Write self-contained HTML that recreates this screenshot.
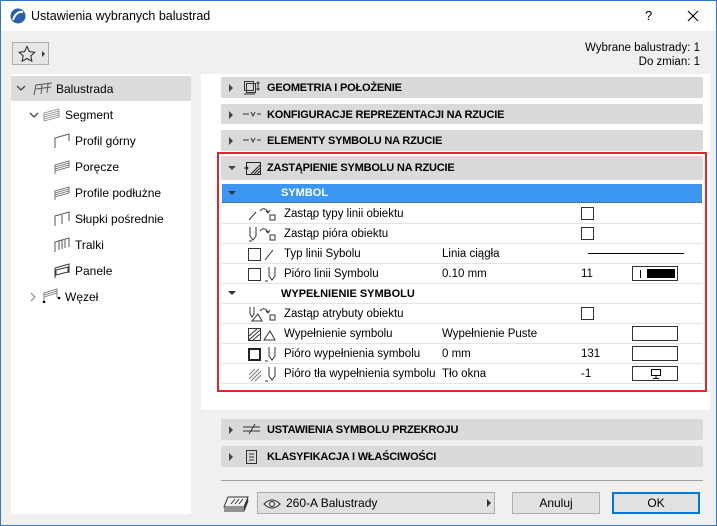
<!DOCTYPE html>
<html><head><meta charset="utf-8"><style>
*{margin:0;padding:0;box-sizing:border-box}
body{width:717px;height:526px;background:#f0f0f0;font-family:"Liberation Sans",sans-serif;font-size:12px;color:#000;position:relative;overflow:hidden}
.win{position:absolute;left:0;top:0;width:717px;height:526px;border:1px solid #2b79d0}
.title{position:absolute;left:1px;top:1px;width:715px;height:30px;background:#fff}
.abs{position:absolute}
.tree{position:absolute;left:11px;top:74px;width:180px;height:440px;background:#fff}
.ti{position:absolute;font-size:12px;white-space:nowrap}
.right{position:absolute;left:201px;top:74px;width:509px;height:336px;background:#fff}
.bar{position:absolute;left:221px;width:482px;background:#dadada;border-radius:2px;font-weight:bold;font-size:11px;letter-spacing:-0.2px}
.bar span{position:absolute;left:46px;top:5px}
.tri{position:absolute;left:8px;top:7px;width:0;height:0;border-top:4px solid transparent;border-bottom:4px solid transparent;border-left:4px solid #444}
.row{position:absolute;left:222px;width:480px;height:20px;border-bottom:1px solid #e4e4e4;font-size:11.5px}
.row .l{position:absolute;left:62px;top:4px}
.row .v{position:absolute;left:220px;top:4px}
.row .n{position:absolute;left:359px;top:4px}
.cb{position:absolute;left:359px;top:3px;width:13px;height:13px;border:1px solid #333;background:#fff}
.sw{position:absolute;left:410px;top:2px;width:46px;height:15px;border:1px solid #333;background:#fff}
.btn{position:absolute;top:492px;height:22px;background:#e1e1e1;border:1px solid #adadad;text-align:center;line-height:20px;font-size:12px}
</style></head><body>
<div class="win"></div>
<div class="title">
<svg class="abs" style="left:9px;top:7px" width="16" height="16"><circle cx="8" cy="8" r="7.5" fill="#2a5fb0"/><path d="M3 12 Q6 3 13 4" stroke="#fff" stroke-width="2" fill="none"/></svg>
<div class="abs" style="left:30px;top:8px;font-size:12.5px">Ustawienia wybranych balustrad</div>
<div class="abs" style="left:644px;top:7px;font-size:13px">?</div>
<svg class="abs" style="left:686px;top:9px" width="12" height="12"><path d="M1 1L11 11M11 1L1 11" stroke="#000" stroke-width="1.1"/></svg>
</div>
<div class="abs" style="left:12px;top:42px;width:37px;height:23px;border:1px solid #adadad;background:#e6e6e6"></div>
<svg class="abs" style="left:17px;top:45px" width="30" height="18"><path d="M10 1.5L12.4 6.6 17.8 7.2 13.8 10.9 14.9 16.2 10 13.5 5.1 16.2 6.2 10.9 2.2 7.2 7.6 6.6Z" fill="none" stroke="#222"/><path d="M25 6L28 9 25 12Z" fill="#333"/></svg>
<div class="abs" style="right:17px;top:41px;font-size:11.5px;text-align:right;line-height:14px">Wybrane balustrady: 1<br>Do zmian: 1</div>

<div class="tree">
<div class="abs" style="left:0;top:2px;width:180px;height:25px;background:#dcdcdc"></div>
<svg class="abs" style="left:5px;top:10px" width="10" height="8"><path d="M1 2L5 6 9 2" stroke="#444" fill="none" stroke-width="1.3"/></svg>
<svg class="abs" style="left:22px;top:8px" width="20" height="14"><path d="M1 13L3 3 19 1M3 7L18 5M8 12L9 3M14 11L15 2" stroke="#555" fill="none"/></svg>
<div class="ti" style="left:45px;top:8px">Balustrada</div>
<svg class="abs" style="left:18px;top:37px" width="10" height="8"><path d="M1 2L5 6 9 2" stroke="#444" fill="none" stroke-width="1.3"/></svg>
<svg class="abs" style="left:32px;top:34px" width="18" height="14"><path d="M1 5L16 1 16 9 1 13Z M1 7L16 3M1 9L16 5M1 11L16 7" stroke="#888" fill="none" stroke-width=".8"/></svg>
<div class="ti" style="left:54px;top:34px">Segment</div>
<svg class="abs" style="left:42px;top:59px" width="18" height="16"><path d="M2 15L2 5 16 1 16 8" stroke="#555" fill="none"/></svg>
<div class="ti" style="left:64px;top:60px">Profil górny</div>
<svg class="abs" style="left:42px;top:85px" width="18" height="16"><path d="M2 15L2 6 16 2 16 8 2 12M2 8L16 4M2 10L16 6" stroke="#666" fill="none" stroke-width=".9"/></svg>
<div class="ti" style="left:64px;top:86px">Poręcze</div>
<svg class="abs" style="left:42px;top:111px" width="18" height="16"><path d="M2 15L2 6 16 2 16 8 2 12M2 8L16 4M2 10L16 6" stroke="#666" fill="none" stroke-width=".9"/></svg>
<div class="ti" style="left:64px;top:112px">Profile podłużne</div>
<svg class="abs" style="left:42px;top:137px" width="18" height="16"><path d="M2 15L2 5 16 1 16 10M9 13L9 4" stroke="#555" fill="none"/></svg>
<div class="ti" style="left:64px;top:138px">Słupki pośrednie</div>
<svg class="abs" style="left:42px;top:163px" width="18" height="16"><path d="M2 15L2 5 16 1 16 10M6 13L6 4M9 12L9 3M12 11L12 3" stroke="#555" fill="none"/></svg>
<div class="ti" style="left:64px;top:164px">Tralki</div>
<svg class="abs" style="left:42px;top:189px" width="18" height="16"><path d="M2 15L2 5 16 1 16 10M3 7L15 4 15 9 3 12Z" stroke="#333" fill="none"/></svg>
<div class="ti" style="left:64px;top:190px">Panele</div>
<svg class="abs" style="left:18px;top:218px" width="8" height="10"><path d="M2 1L6 5 2 9" stroke="#999" fill="none" stroke-width="1.3"/></svg>
<svg class="abs" style="left:30px;top:213px" width="20" height="16"><path d="M3 15L3 6 16 2 16 11M3 8L16 4M3 10L16 6" stroke="#777" fill="none" stroke-width=".9"/><circle cx="3" cy="15" r="1.3"/><circle cx="18" cy="11" r="1.3"/></svg>
<div class="ti" style="left:54px;top:216px">Węzeł</div>
</div>

<div class="right"></div>
<div class="bar" style="top:77px;height:21px"><i class="tri"></i>
<svg class="abs" style="left:22px;top:3px" width="18" height="16"><rect x="1.5" y="1.5" width="9" height="9" fill="none" stroke="#333"/><rect x="3.5" y="3.5" width="9" height="9" fill="none" stroke="#333"/><path d="M1 14H12M15 2V10M13.5 3.5L15 2 16.5 3.5M13.5 8.5L15 10 16.5 8.5" stroke="#333" fill="none"/></svg>
<span>GEOMETRIA I POŁOŻENIE</span></div>
<div class="bar" style="top:104px;height:20px"><i class="tri"></i>
<svg class="abs" style="left:22px;top:5px" width="18" height="10"><path d="M0 5H6M8 3L10 7 12 3M14 5H18" stroke="#333" fill="none"/></svg>
<span>KONFIGURACJE REPREZENTACJI NA RZUCIE</span></div>
<div class="bar" style="top:130px;height:21px"><i class="tri"></i>
<svg class="abs" style="left:22px;top:5px" width="18" height="10"><path d="M0 5H6M8 3L10 7 12 3M14 5H18" stroke="#333" fill="none"/></svg>
<span>ELEMENTY SYMBOLU NA RZUCIE</span></div>

<div class="abs" style="left:217px;top:152px;width:490px;height:240px;border:2px solid #e8242b"></div>
<div class="bar" style="top:156px;height:24px"><i class="tri" style="left:7px;top:10px;border-left:4px solid transparent;border-right:4px solid transparent;border-top:4px solid #444;border-bottom:0"></i>
<svg class="abs" style="left:22px;top:4px" width="20" height="17"><rect x="3.5" y="2.5" width="14" height="12" fill="none" stroke="#222"/><path d="M8 14L17 5M11 14L17 8M14 14L17 11" stroke="#222"/><path d="M1 8H5M3 6L5 8 3 10" stroke="#222" fill="none"/></svg>
<span style="top:6px">ZASTĄPIENIE SYMBOLU NA RZUCIE</span></div>
<div class="abs" style="left:222px;top:184px;width:480px;height:19px;background:#3c97f3;border-bottom:1px dotted #555"></div>
<i class="abs" style="left:228px;top:191px;border-left:4px solid transparent;border-right:4px solid transparent;border-top:4px solid #333"></i>
<div class="abs" style="left:281px;top:187px;font-weight:bold;font-size:11px;color:#fff">SYMBOL</div>

<div class="row" style="top:204px"><svg class="abs" style="left:26px;top:2px" width="34" height="16"><path d="M1 14L8 6M12 5Q16 0 20 6M18 5L20 7 22 4" stroke="#333" fill="none"/><rect x="22" y="9" width="5" height="5" fill="none" stroke="#333"/></svg><div class="l">Zastąp typy linii obiektu</div><i class="cb"></i></div>
<div class="row" style="top:224px"><svg class="abs" style="left:26px;top:2px" width="34" height="16"><path d="M2 1V10L5 14 8 10V1M1 15H4M12 5Q16 0 20 6M18 5L20 7 22 4" stroke="#333" fill="none"/><rect x="22" y="9" width="5" height="5" fill="none" stroke="#333"/></svg><div class="l">Zastąp pióra obiektu</div><i class="cb"></i></div>
<div class="row" style="top:244px"><svg class="abs" style="left:26px;top:2px" width="34" height="16"><rect x="0.5" y="2.5" width="12" height="12" fill="none" stroke="#333"/><path d="M17 14L25 4" stroke="#333"/></svg><div class="l">Typ linii Sybolu</div><div class="v">Linia ciągła</div><i class="abs" style="left:366px;top:9px;width:96px;height:1px;background:#000"></i></div>
<div class="row" style="top:264px"><svg class="abs" style="left:26px;top:2px" width="34" height="16"><rect x="0.5" y="2.5" width="12" height="12" fill="none" stroke="#333"/><path d="M21 1V10L24 14 27 10V1M17 15H20" stroke="#333" fill="none"/></svg><div class="l">Pióro linii Symbolu</div><div class="v">0.10 mm</div><div class="n">11</div><i class="sw"><i class="abs" style="left:7px;top:3px;width:1px;height:8px;background:#000"></i><i class="abs" style="left:14px;top:2px;width:28px;height:9px;background:#000"></i></i></div>
<div class="row" style="top:284px"><i class="abs" style="left:6px;top:7px;border-left:4px solid transparent;border-right:4px solid transparent;border-top:4px solid #333"></i><div class="abs" style="left:59px;top:4px;font-weight:bold;font-size:11px">WYPEŁNIENIE SYMBOLU</div></div>
<div class="row" style="top:304px"><svg class="abs" style="left:26px;top:2px" width="34" height="16"><path d="M2 1V8L4 11 6 8V1M4 15L10 8 14 15ZM12 5Q16 0 20 6M18 5L20 7 22 4" stroke="#333" fill="none"/><rect x="22" y="9" width="5" height="5" fill="none" stroke="#333"/></svg><div class="l">Zastąp atrybuty obiektu</div><i class="cb"></i></div>
<div class="row" style="top:324px"><svg class="abs" style="left:26px;top:2px" width="34" height="16"><rect x="0.5" y="2.5" width="12" height="12" fill="none" stroke="#333"/><path d="M1 10L9 3M1 14L12 4M5 14L12 8" stroke="#333"/><path d="M16 14L22 5 27 14Z" fill="none" stroke="#333"/></svg><div class="l">Wypełnienie symbolu</div><div class="v">Wypełnienie Puste</div><i class="sw"></i></div>
<div class="row" style="top:344px"><svg class="abs" style="left:26px;top:2px" width="34" height="16"><rect x="1" y="3" width="11" height="11" fill="none" stroke="#222" stroke-width="2"/><path d="M21 1V10L24 14 27 10V1M17 15H20" stroke="#333" fill="none"/></svg><div class="l">Pióro wypełnienia symbolu</div><div class="v">0 mm</div><div class="n">131</div><i class="sw"></i></div>
<div class="row" style="top:364px"><svg class="abs" style="left:26px;top:2px" width="34" height="16"><path d="M1 9L7 3M1 13L11 3M3 15L13 5M7 15L13 9" stroke="#777"/><path d="M21 1V10L24 14 27 10V1M17 15H20" stroke="#333" fill="none"/></svg><div class="l">Pióro tła wypełnienia symbolu</div><div class="v">Tło okna</div><div class="n">-1</div><i class="sw"><svg class="abs" style="left:17px;top:1px" width="12" height="12"><rect x="1.5" y="1.5" width="9" height="6" fill="none" stroke="#000"/><path d="M6 8V10M3 10.5H9" stroke="#000"/></svg></i></div>

<div class="bar" style="top:419px;height:21px"><i class="tri"></i>
<svg class="abs" style="left:22px;top:4px" width="18" height="12"><path d="M0 4H17M0 8H17M6 11L12 1" stroke="#333" fill="none"/></svg>
<span>USTAWIENIA SYMBOLU PRZEKROJU</span></div>
<div class="bar" style="top:446px;height:21px"><i class="tri"></i>
<svg class="abs" style="left:24px;top:3px" width="14" height="16"><rect x="1.5" y="1.5" width="10" height="13" fill="none" stroke="#333"/><path d="M4 5H9M4 8H9M4 11H9" stroke="#333"/></svg>
<span>KLASYFIKACJA I WŁAŚCIWOŚCI</span></div>
<div class="abs" style="left:221px;top:480px;width:482px;height:1px;background:#a0a0a0"></div>

<svg class="abs" style="left:222px;top:494px" width="28" height="20"><path d="M6 3H26L22 13H2Z M2 15H22L26 5M2 17H22L26 7" stroke="#333" fill="none"/><path d="M9 10L13 5M13 10L17 5M17 10L21 5" stroke="#333"/></svg>
<div class="btn" style="left:257px;width:238px;text-align:left;padding-left:28px">260-A Balustrady</div>
<svg class="abs" style="left:263px;top:498px" width="18" height="12"><path d="M1 6Q9 -2 17 6Q9 14 1 6Z" fill="none" stroke="#333"/><circle cx="9" cy="6" r="2.5" fill="none" stroke="#333"/></svg>
<i class="abs" style="left:487px;top:499px;border-top:4px solid transparent;border-bottom:4px solid transparent;border-left:4px solid #333"></i>
<div class="btn" style="left:512px;width:88px">Anuluj</div>
<div class="btn" style="left:612px;width:88px;border:2px solid #0078d7;line-height:18px">OK</div>
</body></html>
